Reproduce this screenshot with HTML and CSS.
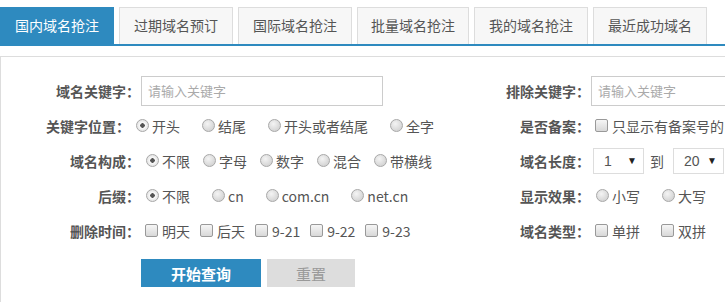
FILE: index.html
```html
<html>
    <head>
        <meta charset="utf-8">
        <link rel="stylesheet" href="styles.css">
    </head>
    <body>
        <div class="tabs">
            <a class="tab active">国内域名抢注</a>
            <a class="tab">过期域名预订</a>
            <a class="tab">国际域名抢注</a>
            <a class="tab narrow">批量域名抢注</a>
            <a class="tab">我的域名抢注</a>
            <a class="tab">最近成功域名</a>
        </div>
        <div class="panel">
            <div class="form">
                <div class="row">
                    <span class="lbl">域名关键字：</span>
                    <input class="kw" type="text" placeholder="请输入关键字">
                </div>
                <div class="row">
                    <span class="lbl">排除关键字：</span>
                    <input class="kw" type="text" placeholder="请输入关键字">
                </div>

                <div class="row">
                    <span class="lbl">关键字位置：</span>
                    <label class="opt wide"><input type="radio" name="pos" checked>开头</label>
                    <label class="opt wide"><input type="radio" name="pos">结尾</label>
                    <label class="opt wide"><input type="radio" name="pos">开头或者结尾</label>
                    <label class="opt wide"><input type="radio" name="pos">全字</label>
                </div>
                <div class="row">
                    <span class="lbl">是否备案：</span>
                    <label class="opt"><input type="checkbox">只显示有备案号的</label>
                </div>

                <div class="row">
                    <span class="lbl">域名构成：</span>
                    <label class="opt"><input type="radio" name="make" checked>不限</label>
                    <label class="opt"><input type="radio" name="make">字母</label>
                    <label class="opt"><input type="radio" name="make">数字</label>
                    <label class="opt"><input type="radio" name="make">混合</label>
                    <label class="opt"><input type="radio" name="make">带横线</label>
                </div>
                <div class="row">
                    <span class="lbl">域名长度：</span>
                    <div class="sel"><span>1</span><span class="arrow">▼</span></div>
                    <span class="to">到</span>
                    <div class="sel"><span>20</span><span class="arrow">▼</span></div>
                </div>

                <div class="row">
                    <span class="lbl">后缀：</span>
                    <label class="opt wide"><input type="radio" name="suf" checked>不限</label>
                    <label class="opt wide"><input type="radio" name="suf">cn</label>
                    <label class="opt wide"><input type="radio" name="suf">com.cn</label>
                    <label class="opt wide"><input type="radio" name="suf">net.cn</label>
                </div>
                <div class="row">
                    <span class="lbl">显示效果：</span>
                    <label class="opt wide"><input type="radio" name="show">小写</label>
                    <label class="opt wide"><input type="radio" name="show">大写</label>
                    <label class="opt wide"><input type="radio" name="show">首字母大写</label>
                </div>

                <div class="row">
                    <span class="lbl">删除时间：</span>
                    <label class="opt box"><input type="checkbox">明天</label>
                    <label class="opt box"><input type="checkbox">后天</label>
                    <label class="opt box"><input type="checkbox">9-21</label>
                    <label class="opt box"><input type="checkbox">9-22</label>
                    <label class="opt box"><input type="checkbox">9-23</label>
                </div>
                <div class="row">
                    <span class="lbl">域名类型：</span>
                    <label class="opt wide"><input type="checkbox">单拼</label>
                    <label class="opt wide"><input type="checkbox">双拼</label>
                    <label class="opt wide"><input type="checkbox">三拼</label>
                </div>
            </div>
            <div class="actions">
                <button class="btn-go">开始查询</button>
                <button class="btn-reset">重置</button>
            </div>
        </div>
    </body>
</html>
```

FILE: styles.css
```css
html, body {
    overflow: hidden;
}
body {
    margin: 0;
    background-color: white;
    color: #555;
    font-family: "Noto Sans CJK SC", "Noto Sans", sans-serif;
}
.tabs {
    display: flex;
    gap: 5px;
    padding-top: 7px;
    border-bottom: 2px solid #2e8abf;
    width: 1000px;
}
.tab {
    box-sizing: border-box;
    width: 114px;
    height: 37px;
    line-height: 35px;
    text-align: center;
    font-size: 14px;
    color: #555;
    background-color: #f7f7f7;
    border: 1px solid #ddd;
    border-bottom: 0px;
}
.tab.narrow {
    width: 112px;
}
.tab.active {
    background-color: #2e8abf;
    border-color: #2e8abf;
    color: white;
}
.panel {
    margin-top: 10px;
    border-top: 1px solid #ddd;
    border-left: 1px solid #ddd;
    padding-top: 16px;
    width: 1000px;
    height: 300px;
}
.form {
    display: grid;
    grid-template-columns: 450px 450px;
    grid-auto-rows: 35px;
    margin-left: -1px;
}
.row {
    display: flex;
    align-items: center;
    white-space: nowrap;
}
.lbl {
    width: 140px;
    text-align: right;
    font-size: 14px;
    font-weight: bold;
    color: #555;
}
.kw {
    box-sizing: border-box;
    margin: 0 0 0 1px;
    width: 242px;
    height: 30px;
    border: 1px solid #ccc;
    padding: 0 6px;
    font-family: inherit;
    font-size: 13px;
    outline: none;
}
.kw::placeholder {
    color: #aaa;
}
.opt {
    display: flex;
    align-items: center;
    font-size: 14px;
    color: #555;
    margin-right: 7px;
}
.opt.wide {
    margin-right: 16px;
}
.opt.box {
    margin-right: 5px;
}
.opt input[type=radio] {
    appearance: none;
    box-sizing: border-box;
    width: 13px;
    height: 13px;
    margin: 0 3px 0 6px;
    border-radius: 50%;
    border: 1px solid #a8a8a8;
    background: radial-gradient(circle at 40% 35%, #f4f4f4 0, #d6d6d6 70%);
}
.opt input[type=radio]:checked {
    background: radial-gradient(circle, #555 0, #555 2px, #fafafa 2.5px, #e8e8e8 5px);
}
.opt input[type=checkbox] {
    appearance: none;
    box-sizing: border-box;
    width: 13px;
    height: 13px;
    margin: 0 4px 0 5px;
    border-radius: 2px;
    border: 1px solid #999;
    background: linear-gradient(#f6f6f6, #d8d8d8);
}
.sel {
    box-sizing: border-box;
    display: flex;
    justify-content: space-between;
    align-items: center;
    width: 51px;
    height: 26px;
    margin-left: 3px;
    padding: 0 6px 0 10px;
    border: 1px solid #ddd;
    font-family: "Liberation Sans", sans-serif;
    font-size: 14px;
    color: #555;
}
.arrow {
    font-size: 10px;
    color: #222;
}
.to {
    font-size: 14px;
    margin: 0 6px 0 6px;
}
.actions {
    display: flex;
    gap: 6px;
    margin-top: 11px;
    margin-left: 140px;
}
.btn-go, .btn-reset {
    height: 28px;
    border: 0px;
    font-family: inherit;
    font-size: 15px;
    padding: 0;
}
.btn-go {
    width: 120px;
    background-color: #2e8abf;
    color: white;
    font-weight: bold;
}
.btn-reset {
    width: 88px;
    background-color: #ddd;
    color: #999;
}
```
